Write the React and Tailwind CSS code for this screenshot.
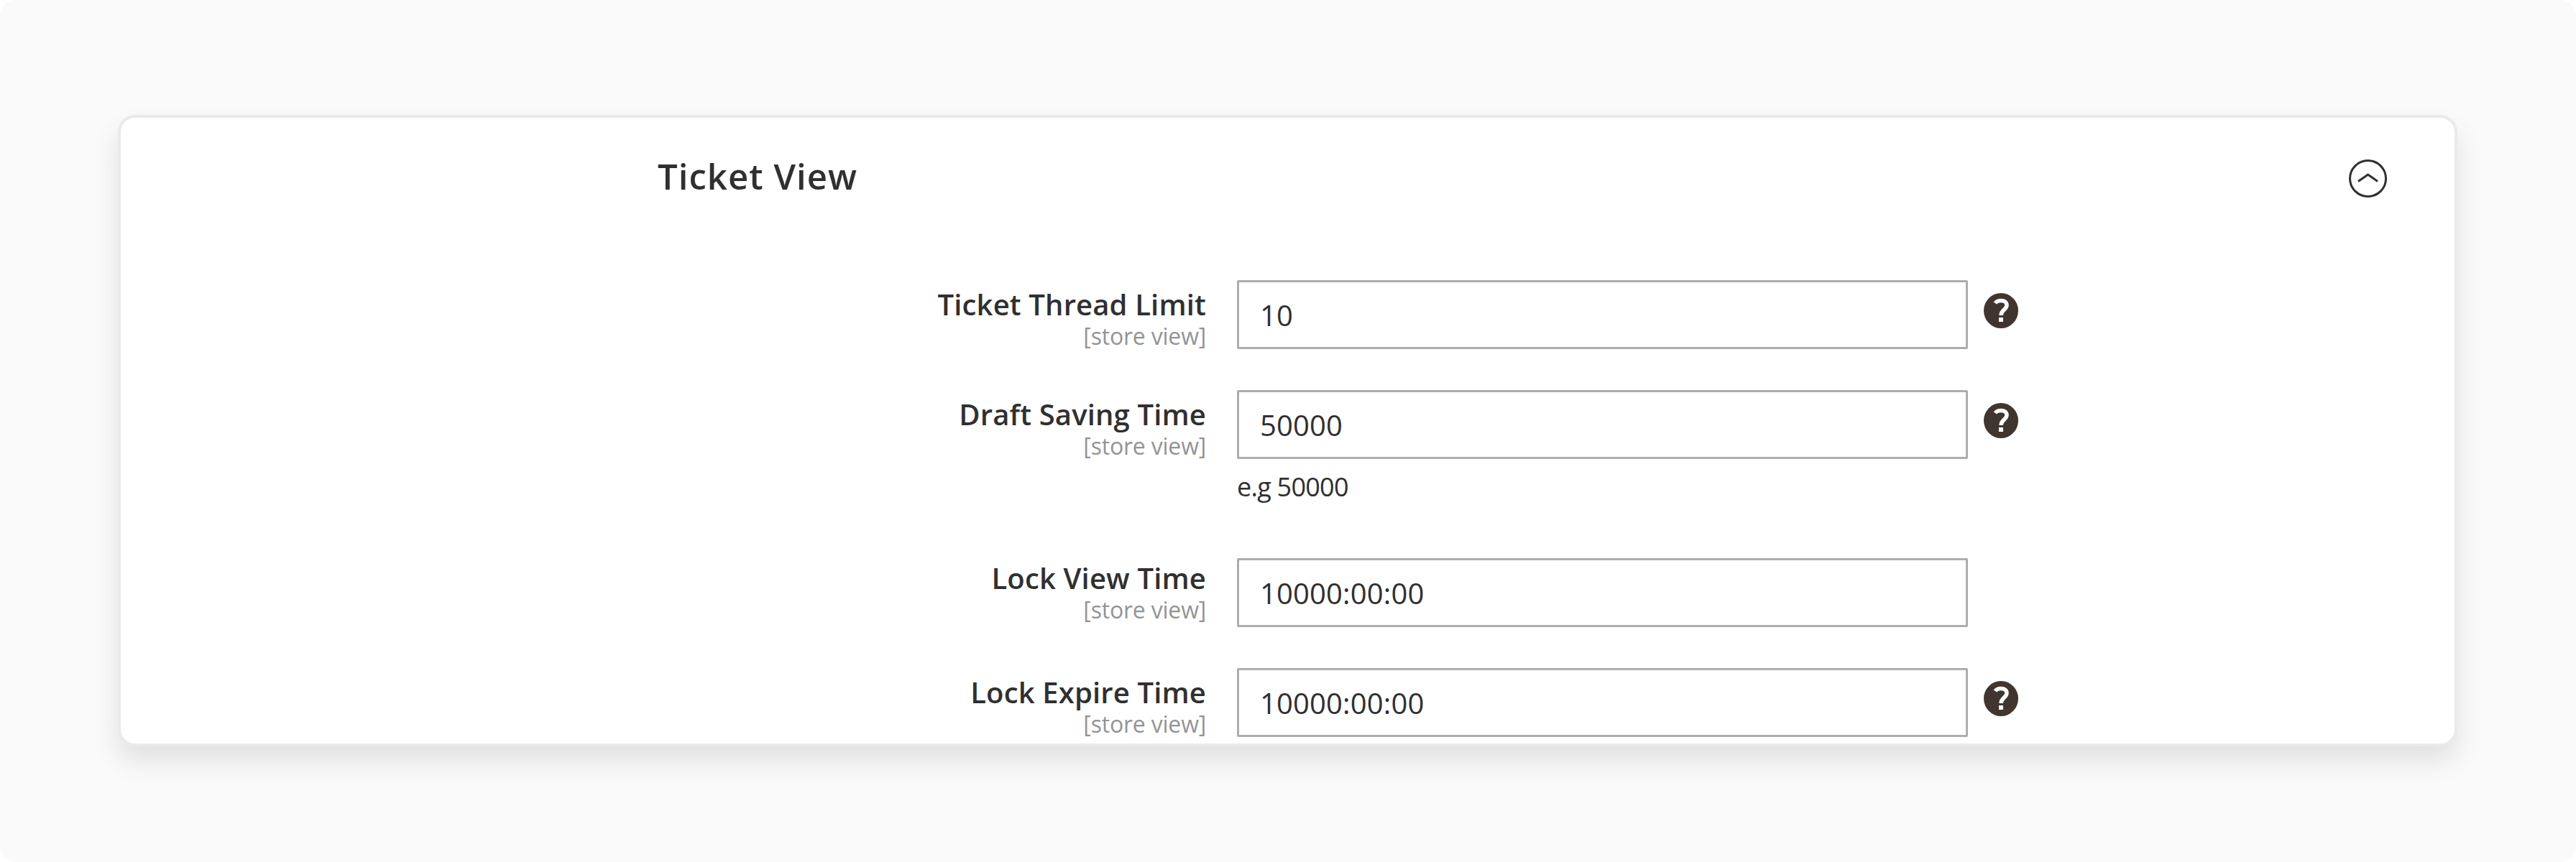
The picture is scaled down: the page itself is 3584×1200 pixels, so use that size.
import { useState } from 'react';

const FIELDS = [
  { key: 'thread', label: 'Ticket Thread Limit', value: '10', help: true, row: 'h-[153px]', offset: 'pt-[11px]' },
  { key: 'draft', label: 'Draft Saving Time', value: '50000', help: true, note: 'e.g 50000', row: 'h-[234px]', offset: 'pt-[11px]' },
  { key: 'lockView', label: 'Lock View Time', value: '10000:00:00', row: 'h-[153px]', offset: 'pt-[5px]' },
  { key: 'lockExpire', label: 'Lock Expire Time', value: '10000:00:00', help: true, row: 'h-[96px]', offset: 'pt-[11px]' },
];

function ChevronCircle() {
  return (
    <svg width="56" height="56" viewBox="0 0 56 56" fill="none" stroke="#303030" strokeWidth="3">
      <circle cx="27.500" cy="27.500" r="25" />
      <path d="M14 31.500 L27.500 22 L41 31.500" />
    </svg>
  );
}

function HelpIcon() {
  return (
    <svg width="48" height="49" viewBox="0 0 48 49" fill="none" className="ml-[22px] mt-[18px]">
      <ellipse cx="24" cy="24.500" rx="24" ry="24.500" fill="#41362f" />
      <path d="M16 14 C18 11 21 10.500 24 10.500 C29 10.500 32 13 32 17 C32 23 24 23.500 24 31" stroke="#fff" strokeWidth="5.5" />
      <path d="M21 37 H27" stroke="#fff" strokeWidth="6" />
    </svg>
  );
}

function Field({ field, value, onChange }) {
  return (
    <div className={`flex items-start ${field.row}`}>
      <label htmlFor={field.key} className={`flex w-[1510px] flex-col items-end whitespace-nowrap ${field.offset}`}>
        <span className="text-[40px] leading-[46px] font-semibold tracking-[0.15px] text-[#303030]">{field.label}</span>
        <span className="text-[32px] leading-[42px] tracking-[-0.2px] text-[#949494]">[store view]</span>
      </label>
      <div className="ml-[43px] w-[1017px]">
        <input
          id={field.key}
          value={value}
          onChange={(e) => onChange(field.key, e.target.value)}
          className="block h-[96px] w-full rounded-[2px] border-[3px] border-[#adadad] bg-white px-[29px] text-[40px] tracking-[0.15px] text-[#303030] outline-none"
        />
        {field.note && (
          <p className="mt-[15px] text-[36px] leading-[48px] tracking-[-0.75px] text-[#303030]">{field.note}</p>
        )}
      </div>
      {field.help && <HelpIcon />}
    </div>
  );
}

export default function App() {
  const [values, setValues] = useState(() => Object.fromEntries(FIELDS.map(f => [f.key, f.value])));

  const handleChange = (key, value) => setValues(prev => ({ ...prev, [key]: value }));

  return (
    <div className="h-[1200px] w-[3584px] overflow-hidden rounded-[22px] bg-[#fafafa] pl-[164px] pt-[160px] font-['Open_Sans',sans-serif]">
      <section className="h-[879px] w-[3255px] overflow-hidden rounded-[24px] border-4 border-[#eaeaea] bg-white shadow-[0_20px_36px_rgba(0,0,0,0.1)]">
        {/* Section header */}
        <header className="flex h-[226px] items-start justify-between pl-[747px] pr-[92px]">
          <h2 className="mt-[46px] text-[49px] leading-[70px] font-semibold tracking-[1.05px] text-[#303030]">Ticket View</h2>
          <button type="button" aria-label="Collapse" className="mt-[57px]">
            <ChevronCircle />
          </button>
        </header>

        {FIELDS.map(field => (
          <Field key={field.key} field={field} value={values[field.key]} onChange={handleChange} />
        ))}
      </section>
    </div>
  );
}
